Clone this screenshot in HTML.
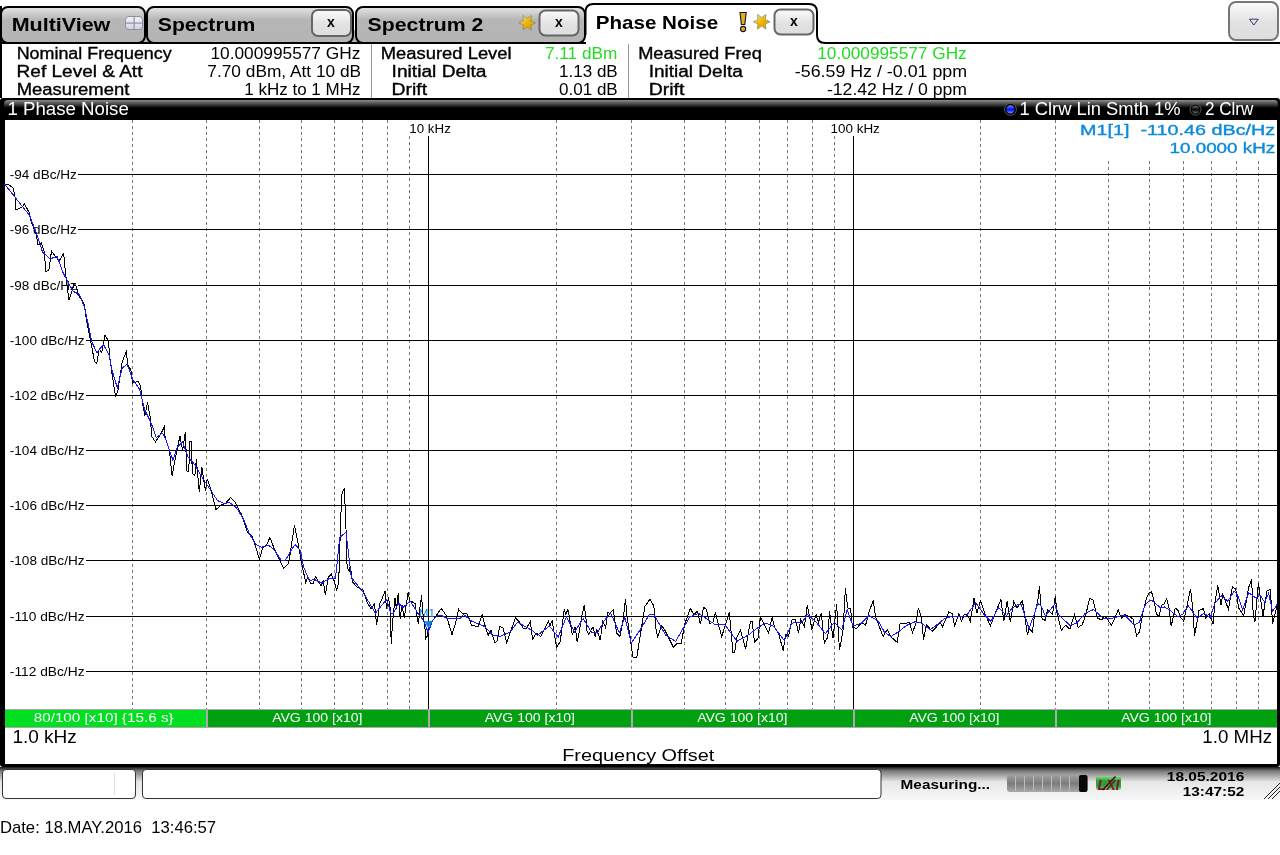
<!DOCTYPE html>
<html><head><meta charset="utf-8"><title>Phase Noise</title>
<style>
html,body{margin:0;padding:0;background:#fff;width:1280px;height:855px;overflow:hidden}
svg{display:block;font-family:"Liberation Sans", sans-serif;will-change:transform}
</style></head>
<body>
<svg width="1280" height="855" viewBox="0 0 1280 855">
<defs>
<linearGradient id="tabg" x1="0" y1="0" x2="0" y2="1">
<stop offset="0" stop-color="#e6e6e6"/><stop offset="0.35" stop-color="#b6b6b6"/><stop offset="1" stop-color="#b4b4b4"/>
</linearGradient>
<linearGradient id="icong" x1="0" y1="0" x2="0" y2="1"><stop offset="0" stop-color="#f4f4fa"/><stop offset="1" stop-color="#d4d4e2"/></linearGradient>
<linearGradient id="lxig" x1="0" y1="0" x2="0" y2="1"><stop offset="0" stop-color="#9ad09a"/><stop offset="0.35" stop-color="#2f9f2f"/><stop offset="0.7" stop-color="#2f9f2f"/><stop offset="1" stop-color="#8fd08f"/></linearGradient>
<linearGradient id="btng" x1="0" y1="0" x2="0" y2="1">
<stop offset="0" stop-color="#fbfbfb"/><stop offset="0.55" stop-color="#e2e2e2"/><stop offset="1" stop-color="#dedede"/>
</linearGradient>
<linearGradient id="hdrg" x1="0" y1="0" x2="0" y2="1">
<stop offset="0" stop-color="#8e8e8e"/><stop offset="0.4" stop-color="#000"/><stop offset="1" stop-color="#000"/>
</linearGradient>
<linearGradient id="statg" x1="0" y1="0" x2="0" y2="1">
<stop offset="0" stop-color="#1a1a1a"/><stop offset="0.12" stop-color="#7a7a7a"/><stop offset="0.45" stop-color="#e6e6e6"/><stop offset="1" stop-color="#f8f8f8"/>
</linearGradient>
<linearGradient id="progg" x1="0" y1="0" x2="0" y2="1">
<stop offset="0" stop-color="#a0a0a0"/><stop offset="0.5" stop-color="#7c7c7c"/><stop offset="1" stop-color="#a8a8a8"/>
</linearGradient>
<linearGradient id="starg" x1="0" y1="0" x2="1" y2="1">
<stop offset="0" stop-color="#fff0b0"/><stop offset="0.5" stop-color="#ebb400"/><stop offset="1" stop-color="#d9a000"/>
</linearGradient>
<linearGradient id="dotbl" x1="0" y1="0" x2="0" y2="1"><stop offset="0" stop-color="#7888ff"/><stop offset="0.5" stop-color="#0010ee"/><stop offset="1" stop-color="#7888ff"/></linearGradient>
<linearGradient id="dotgr" x1="0" y1="0" x2="0" y2="1"><stop offset="0" stop-color="#707070"/><stop offset="0.5" stop-color="#000"/><stop offset="1" stop-color="#707070"/></linearGradient>
<radialGradient id="dotb" cx="0.45" cy="0.4" r="0.6">
<stop offset="0" stop-color="#8090ff"/><stop offset="1" stop-color="#1020e0"/>
</radialGradient>
</defs>

<!-- Tabs -->
<rect x="138" y="30" width="16" height="13" fill="#b4b4b4"/>
<rect x="346" y="30" width="16" height="13" fill="#b4b4b4"/>
<rect x="1" y="7" width="144" height="36" rx="7" fill="url(#tabg)" stroke="#000" stroke-width="2"/>
<rect x="147" y="7" width="206" height="36" rx="7" fill="url(#tabg)" stroke="#000" stroke-width="2"/>
<rect x="356" y="7" width="229" height="36" rx="7" fill="url(#tabg)" stroke="#000" stroke-width="2"/>
<path d="M585.5,35 V12 Q585.5,4 593.5,4 H809 Q817,4 817,12 V35 Q817,43 825,43 H1280" fill="#fff" stroke="#000" stroke-width="2"/>
<!-- multiview icon -->
<rect x="0" y="42" width="586" height="2" fill="#000"/>
<rect x="125.5" y="16.5" width="17" height="13" rx="3.5" fill="url(#icong)" stroke="#8f8fa8" stroke-width="1"/>
<rect x="126" y="22.5" width="16" height="1.2" fill="#8f8fa8"/>
<rect x="133.5" y="17" width="1.2" height="12" fill="#8f8fa8"/>
<!-- close buttons -->
<rect x="312" y="10" width="39" height="26" rx="6" fill="url(#btng)" stroke="#666" stroke-width="2"/>
<rect x="539.5" y="10.5" width="39" height="25" rx="6" fill="url(#btng)" stroke="#666" stroke-width="2"/>
<rect x="774.5" y="9.5" width="39" height="25" rx="6" fill="url(#btng)" stroke="#666" stroke-width="2"/>
<g font-weight="bold" font-size="14" fill="#000" text-anchor="middle">
<text x="331" y="27">x</text><text x="559" y="27">x</text><text x="794" y="26">x</text>
</g>
<!-- stars -->
<path d="M535.60,22.80 L530.92,24.95 L531.40,30.07 L527.20,27.10 L523.00,30.07 L523.48,24.95 L518.80,22.80 L523.48,20.65 L523.00,15.53 L527.20,18.50 L531.40,15.53 L530.92,20.65 Z" fill="url(#starg)" stroke="#8a8060" stroke-width="0.7"/>
<path d="M770.10,21.80 L765.42,23.95 L765.90,29.07 L761.70,26.10 L757.50,29.07 L757.98,23.95 L753.30,21.80 L757.98,19.65 L757.50,14.53 L761.70,17.50 L765.90,14.53 L765.42,19.65 Z" fill="url(#starg)" stroke="#8a8060" stroke-width="0.7"/>
<!-- exclamation -->
<path d="M740,12.5 H746.2 L744.8,24.5 H741.4 Z" fill="#e8b000" stroke="#101040" stroke-width="1.1"/>
<circle cx="743.1" cy="29" r="2.6" fill="#e8b000" stroke="#101040" stroke-width="1.1"/>
<!-- dropdown button -->
<rect x="1229" y="2" width="49" height="38" rx="7" fill="url(#btng)" stroke="#777" stroke-width="2"/>
<path d="M1249.5,19.2 H1258.2 L1253.8,25 Z" fill="none" stroke="#33336a" stroke-width="1"/>

<!-- Info panel -->
<rect x="0" y="6" width="2" height="92" fill="#000"/>
<rect x="371" y="44" width="1" height="54" fill="#999"/>
<rect x="628" y="44" width="1" height="54" fill="#999"/>

<!-- Plot frame -->
<rect x="0" y="98" width="1280" height="669" rx="3" fill="#000"/>
<rect x="4" y="100" width="1274" height="20" rx="4" fill="url(#hdrg)"/>
<rect x="5" y="120" width="1272" height="644" fill="#fff"/>
<!-- trace dots -->
<circle cx="1010.4" cy="109.4" r="6" fill="#000" stroke="#555" stroke-width="1"/>
<circle cx="1010.4" cy="109.4" r="4.2" fill="url(#dotbl)"/>
<circle cx="1195.5" cy="109.6" r="5.5" fill="#000" stroke="#585858" stroke-width="1"/>
<circle cx="1195.5" cy="109.6" r="3.8" fill="url(#dotgr)"/>

<line x1="132.5" y1="120" x2="132.5" y2="709" stroke="#777" stroke-width="1" stroke-dasharray="3 3"/>
<line x1="206.5" y1="120" x2="206.5" y2="709" stroke="#777" stroke-width="1" stroke-dasharray="3 3"/>
<line x1="259.5" y1="120" x2="259.5" y2="709" stroke="#777" stroke-width="1" stroke-dasharray="3 3"/>
<line x1="301.5" y1="120" x2="301.5" y2="709" stroke="#777" stroke-width="1" stroke-dasharray="3 3"/>
<line x1="334.5" y1="120" x2="334.5" y2="709" stroke="#777" stroke-width="1" stroke-dasharray="3 3"/>
<line x1="362.5" y1="120" x2="362.5" y2="709" stroke="#777" stroke-width="1" stroke-dasharray="3 3"/>
<line x1="387.5" y1="120" x2="387.5" y2="709" stroke="#777" stroke-width="1" stroke-dasharray="3 3"/>
<line x1="409.5" y1="136" x2="409.5" y2="709" stroke="#777" stroke-width="1" stroke-dasharray="3 3"/>
<line x1="556.5" y1="120" x2="556.5" y2="709" stroke="#777" stroke-width="1" stroke-dasharray="3 3"/>
<line x1="631.5" y1="120" x2="631.5" y2="709" stroke="#777" stroke-width="1" stroke-dasharray="3 3"/>
<line x1="684.5" y1="120" x2="684.5" y2="709" stroke="#777" stroke-width="1" stroke-dasharray="3 3"/>
<line x1="725.5" y1="120" x2="725.5" y2="709" stroke="#777" stroke-width="1" stroke-dasharray="3 3"/>
<line x1="759.5" y1="120" x2="759.5" y2="709" stroke="#777" stroke-width="1" stroke-dasharray="3 3"/>
<line x1="787.5" y1="120" x2="787.5" y2="709" stroke="#777" stroke-width="1" stroke-dasharray="3 3"/>
<line x1="812.5" y1="120" x2="812.5" y2="709" stroke="#777" stroke-width="1" stroke-dasharray="3 3"/>
<line x1="834.5" y1="136" x2="834.5" y2="709" stroke="#777" stroke-width="1" stroke-dasharray="3 3"/>
<line x1="980.5" y1="120" x2="980.5" y2="709" stroke="#777" stroke-width="1" stroke-dasharray="3 3"/>
<line x1="1055.5" y1="120" x2="1055.5" y2="709" stroke="#777" stroke-width="1" stroke-dasharray="3 3"/>
<line x1="1108.5" y1="161" x2="1108.5" y2="709" stroke="#777" stroke-width="1" stroke-dasharray="3 3"/>
<line x1="1149.5" y1="161" x2="1149.5" y2="709" stroke="#777" stroke-width="1" stroke-dasharray="3 3"/>
<line x1="1183.5" y1="161" x2="1183.5" y2="709" stroke="#777" stroke-width="1" stroke-dasharray="3 3"/>
<line x1="1211.5" y1="161" x2="1211.5" y2="709" stroke="#777" stroke-width="1" stroke-dasharray="3 3"/>
<line x1="1236.5" y1="161" x2="1236.5" y2="709" stroke="#777" stroke-width="1" stroke-dasharray="3 3"/>
<line x1="1258.5" y1="161" x2="1258.5" y2="709" stroke="#777" stroke-width="1" stroke-dasharray="3 3"/>
<line x1="428.5" y1="136" x2="428.5" y2="709" stroke="#000" stroke-width="1"/>
<line x1="853.5" y1="136" x2="853.5" y2="709" stroke="#000" stroke-width="1"/>
<line x1="78" y1="174.5" x2="1277" y2="174.5" stroke="#000" stroke-width="1"/>
<line x1="78" y1="229.5" x2="1277" y2="229.5" stroke="#000" stroke-width="1"/>
<line x1="78" y1="285.5" x2="1277" y2="285.5" stroke="#000" stroke-width="1"/>
<line x1="86" y1="340.5" x2="1277" y2="340.5" stroke="#000" stroke-width="1"/>
<line x1="86" y1="395.5" x2="1277" y2="395.5" stroke="#000" stroke-width="1"/>
<line x1="86" y1="450.5" x2="1277" y2="450.5" stroke="#000" stroke-width="1"/>
<line x1="86" y1="505.5" x2="1277" y2="505.5" stroke="#000" stroke-width="1"/>
<line x1="86" y1="560.5" x2="1277" y2="560.5" stroke="#000" stroke-width="1"/>
<line x1="86" y1="616.5" x2="1277" y2="616.5" stroke="#000" stroke-width="1"/>
<line x1="86" y1="671.5" x2="1277" y2="671.5" stroke="#000" stroke-width="1"/>

<!-- green bar -->
<rect x="5" y="709" width="1272" height="19" fill="#b0a8b0"/>
<rect x="5" y="710" width="201" height="17" fill="#00e020"/>
<rect x="208" y="710" width="220" height="17" fill="#00a010"/>
<rect x="430" y="710" width="201" height="17" fill="#00a010"/>
<rect x="633" y="710" width="220" height="17" fill="#00a010"/>
<rect x="855" y="710" width="200" height="17" fill="#00a010"/>
<rect x="1057" y="710" width="220" height="17" fill="#00a010"/>

<!-- status bar -->
<rect x="0" y="767" width="1280" height="33" fill="url(#statg)"/>
<rect x="2.5" y="769.5" width="133" height="29" rx="3.5" fill="#fff" stroke="#333" stroke-width="1"/>
<rect x="114" y="773" width="1" height="22" fill="#ddd"/>
<rect x="142.5" y="769.5" width="738.5" height="29" rx="3.5" fill="#fff" stroke="#333" stroke-width="1"/>
<!-- progress bar -->
<rect x="1007" y="775" width="80.5" height="17" rx="3" fill="url(#progg)"/>
<g fill="#bdbdbd">
<rect x="1015" y="776" width="1" height="15"/><rect x="1024" y="776" width="1" height="15"/><rect x="1033" y="776" width="1" height="15"/>
<rect x="1042" y="776" width="1" height="15"/><rect x="1051" y="776" width="1" height="15"/><rect x="1060" y="776" width="1" height="15"/>
<rect x="1069" y="776" width="1" height="15"/>
</g>
<rect x="1079" y="775" width="8.5" height="17" rx="2" fill="#080808"/>
<!-- LXI -->
<rect x="1096" y="776" width="25" height="14" rx="2" fill="url(#lxig)"/>
<text x="1097.5" y="789.5" font-size="15.5" font-weight="bold" font-style="italic" fill="#7a1538" textLength="22" lengthAdjust="spacingAndGlyphs">LXI</text>
<line x1="1102.5" y1="790" x2="1115.5" y2="776.5" stroke="#4a1020" stroke-width="1.6"/>
<!-- hatch -->
<g stroke="#222" stroke-width="1">
<line x1="1264" y1="799" x2="1280" y2="783"/><line x1="1268" y1="799" x2="1280" y2="787"/><line x1="1272" y1="799" x2="1280" y2="791"/>
</g>

<text x="11.67" y="31.00" font-size="19.00" font-weight="bold" fill="#000" textLength="98.68" lengthAdjust="spacingAndGlyphs" >MultiView</text>
<text x="157.80" y="31.00" font-size="19.00" font-weight="bold" fill="#000" textLength="97.60" lengthAdjust="spacingAndGlyphs" >Spectrum</text>
<text x="367.60" y="31.00" font-size="19.00" font-weight="bold" fill="#000" textLength="115.83" lengthAdjust="spacingAndGlyphs" >Spectrum 2</text>
<text x="595.72" y="29.00" font-size="19.00" font-weight="bold" fill="#000" textLength="122.40" lengthAdjust="spacingAndGlyphs" >Phase Noise</text>
<text x="16.68" y="59.00" font-size="16.00" font-weight="normal" fill="#000" textLength="155.02" lengthAdjust="spacingAndGlyphs"  stroke="#000" stroke-width="0.35">Nominal Frequency</text>
<text x="16.62" y="77.00" font-size="16.00" font-weight="normal" fill="#000" textLength="125.83" lengthAdjust="spacingAndGlyphs"  stroke="#000" stroke-width="0.35">Ref Level &amp; Att</text>
<text x="16.65" y="95.00" font-size="16.00" font-weight="normal" fill="#000" textLength="112.71" lengthAdjust="spacingAndGlyphs"  stroke="#000" stroke-width="0.35">Measurement</text>
<text x="210.42" y="59.00" font-size="16.00" font-weight="normal" fill="#000" textLength="149.98" lengthAdjust="spacingAndGlyphs" >10.000995577 GHz</text>
<text x="207.30" y="77.00" font-size="16.00" font-weight="normal" fill="#000" textLength="153.82" lengthAdjust="spacingAndGlyphs" >7.70 dBm, Att 10 dB</text>
<text x="244.34" y="95.00" font-size="16.00" font-weight="normal" fill="#000" textLength="116.06" lengthAdjust="spacingAndGlyphs" >1 kHz to 1 MHz</text>
<text x="380.75" y="59.00" font-size="16.00" font-weight="normal" fill="#000" textLength="130.89" lengthAdjust="spacingAndGlyphs"  stroke="#000" stroke-width="0.35">Measured Level</text>
<text x="391.60" y="77.00" font-size="16.00" font-weight="normal" fill="#000" textLength="94.78" lengthAdjust="spacingAndGlyphs"  stroke="#000" stroke-width="0.35">Initial Delta</text>
<text x="391.59" y="95.00" font-size="16.00" font-weight="normal" fill="#000" textLength="35.54" lengthAdjust="spacingAndGlyphs"  stroke="#000" stroke-width="0.35">Drift</text>
<text x="544.90" y="59.00" font-size="16.00" font-weight="normal" fill="#22dd22" textLength="72.45" lengthAdjust="spacingAndGlyphs" >7.11 dBm</text>
<text x="559.14" y="77.00" font-size="16.00" font-weight="normal" fill="#000" textLength="58.58" lengthAdjust="spacingAndGlyphs" >1.13 dB</text>
<text x="559.10" y="95.00" font-size="16.00" font-weight="normal" fill="#000" textLength="58.61" lengthAdjust="spacingAndGlyphs" >0.01 dB</text>
<text x="638.16" y="59.00" font-size="16.00" font-weight="normal" fill="#000" textLength="123.66" lengthAdjust="spacingAndGlyphs"  stroke="#000" stroke-width="0.35">Measured Freq</text>
<text x="648.71" y="77.00" font-size="16.00" font-weight="normal" fill="#000" textLength="94.07" lengthAdjust="spacingAndGlyphs"  stroke="#000" stroke-width="0.35">Initial Delta</text>
<text x="648.68" y="95.00" font-size="16.00" font-weight="normal" fill="#000" textLength="35.74" lengthAdjust="spacingAndGlyphs"  stroke="#000" stroke-width="0.35">Drift</text>
<text x="817.22" y="59.00" font-size="16.00" font-weight="normal" fill="#22dd22" textLength="149.48" lengthAdjust="spacingAndGlyphs" >10.000995577 GHz</text>
<text x="794.80" y="77.00" font-size="16.00" font-weight="normal" fill="#000" textLength="172.27" lengthAdjust="spacingAndGlyphs" >-56.59 Hz / -0.01 ppm</text>
<text x="826.90" y="95.00" font-size="16.00" font-weight="normal" fill="#000" textLength="140.16" lengthAdjust="spacingAndGlyphs" >-12.42 Hz / 0 ppm</text>
<text x="7.43" y="115.00" font-size="17.50" font-weight="normal" fill="#fff" textLength="121.35" lengthAdjust="spacingAndGlyphs" >1 Phase Noise</text>
<text x="1019.45" y="115.00" font-size="17.50" font-weight="normal" fill="#fff" textLength="161.14" lengthAdjust="spacingAndGlyphs" >1 Clrw Lin Smth 1%</text>
<text x="1205.00" y="115.00" font-size="17.50" font-weight="normal" fill="#fff" textLength="48.40" lengthAdjust="spacingAndGlyphs" >2 Clrw</text>
<text x="409.30" y="133.00" font-size="13.00" font-weight="normal" fill="#000" textLength="41.51" lengthAdjust="spacingAndGlyphs" >10 kHz</text>
<text x="830.50" y="133.00" font-size="13.00" font-weight="normal" fill="#000" textLength="49.32" lengthAdjust="spacingAndGlyphs" >100 kHz</text>
<text x="9.80" y="179.00" font-size="13.00" font-weight="normal" fill="#000" textLength="66.92" lengthAdjust="spacingAndGlyphs" >-94 dBc/Hz</text>
<text x="9.80" y="234.00" font-size="13.00" font-weight="normal" fill="#000" textLength="66.92" lengthAdjust="spacingAndGlyphs" >-96 dBc/Hz</text>
<text x="9.80" y="290.00" font-size="13.00" font-weight="normal" fill="#000" textLength="66.92" lengthAdjust="spacingAndGlyphs" >-98 dBc/Hz</text>
<text x="9.80" y="345.00" font-size="13.00" font-weight="normal" fill="#000" textLength="74.72" lengthAdjust="spacingAndGlyphs" >-100 dBc/Hz</text>
<text x="9.80" y="400.00" font-size="13.00" font-weight="normal" fill="#000" textLength="74.72" lengthAdjust="spacingAndGlyphs" >-102 dBc/Hz</text>
<text x="9.80" y="455.00" font-size="13.00" font-weight="normal" fill="#000" textLength="74.72" lengthAdjust="spacingAndGlyphs" >-104 dBc/Hz</text>
<text x="9.80" y="510.00" font-size="13.00" font-weight="normal" fill="#000" textLength="74.72" lengthAdjust="spacingAndGlyphs" >-106 dBc/Hz</text>
<text x="9.80" y="565.00" font-size="13.00" font-weight="normal" fill="#000" textLength="74.72" lengthAdjust="spacingAndGlyphs" >-108 dBc/Hz</text>
<text x="9.80" y="621.00" font-size="13.00" font-weight="normal" fill="#000" textLength="74.73" lengthAdjust="spacingAndGlyphs" >-110 dBc/Hz</text>
<text x="9.80" y="676.00" font-size="13.00" font-weight="normal" fill="#000" textLength="74.73" lengthAdjust="spacingAndGlyphs" >-112 dBc/Hz</text>
<text x="1080.14" y="135.00" font-size="14.50" font-weight="normal" fill="#0b8ad8" textLength="195.10" lengthAdjust="spacingAndGlyphs" xml:space="preserve" stroke="#0b8ad8" stroke-width="0.35">M1[1]  -110.46 dBc/Hz</text>
<text x="1169.50" y="153.00" font-size="14.50" font-weight="normal" fill="#0b8ad8" textLength="105.72" lengthAdjust="spacingAndGlyphs"  stroke="#0b8ad8" stroke-width="0.35">10.0000 kHz</text>
<text x="418.70" y="617.00" font-size="11.60" font-weight="normal" fill="#0b8ad8" textLength="16.25" lengthAdjust="spacingAndGlyphs" >M1</text>
<text x="12.41" y="743.00" font-size="17.50" font-weight="normal" fill="#000" textLength="64.40" lengthAdjust="spacingAndGlyphs" >1.0 kHz</text>
<text x="1202.33" y="743.00" font-size="17.50" font-weight="normal" fill="#000" textLength="69.67" lengthAdjust="spacingAndGlyphs" >1.0 MHz</text>
<text x="562.16" y="761.00" font-size="16.00" font-weight="normal" fill="#000" textLength="152.15" lengthAdjust="spacingAndGlyphs" >Frequency Offset</text>
<text x="33.70" y="722.00" font-size="13.00" font-weight="normal" fill="#fff" textLength="139.93" lengthAdjust="spacingAndGlyphs" >80/100 [x10] {15.6 s}</text>
<text x="272.15" y="722.00" font-size="13.00" font-weight="normal" fill="#fff" textLength="90.36" lengthAdjust="spacingAndGlyphs" >AVG 100 [x10]</text>
<text x="484.65" y="722.00" font-size="13.00" font-weight="normal" fill="#fff" textLength="90.36" lengthAdjust="spacingAndGlyphs" >AVG 100 [x10]</text>
<text x="697.15" y="722.00" font-size="13.00" font-weight="normal" fill="#fff" textLength="90.36" lengthAdjust="spacingAndGlyphs" >AVG 100 [x10]</text>
<text x="909.15" y="722.00" font-size="13.00" font-weight="normal" fill="#fff" textLength="90.36" lengthAdjust="spacingAndGlyphs" >AVG 100 [x10]</text>
<text x="1121.15" y="722.00" font-size="13.00" font-weight="normal" fill="#fff" textLength="90.36" lengthAdjust="spacingAndGlyphs" >AVG 100 [x10]</text>
<text x="900.60" y="789.00" font-size="13.00" font-weight="bold" fill="#000" textLength="89.52" lengthAdjust="spacingAndGlyphs" >Measuring...</text>
<text x="1166.80" y="781.00" font-size="13.00" font-weight="bold" fill="#000" textLength="77.47" lengthAdjust="spacingAndGlyphs" >18.05.2016</text>
<text x="1182.70" y="796.00" font-size="13.00" font-weight="bold" fill="#000" textLength="61.57" lengthAdjust="spacingAndGlyphs" >13:47:52</text>
<text x="-0.08" y="833.00" font-size="17.00" font-weight="normal" fill="#000" textLength="216.23" lengthAdjust="spacingAndGlyphs" xml:space="preserve">Date: 18.MAY.2016  13:46:57</text>
<!-- traces -->
<polyline points="4.5,184.0 9.0,185.0 12.9,187.9 14.8,194.3 16.0,209.7 21.9,207.2 24.5,204.0 29.0,212.3 31.5,222.6 36.0,233.0 38.0,245.0 41.2,243.0 44.4,252.0 45.7,271.5 48.9,270.0 51.5,251.0 56.0,257.0 59.2,261.0 63.7,253.5 65.6,274.0 69.0,300.3 73.9,284.7 76.4,286.4 78.0,294.5 84.5,304.4 86.2,319.0 91.9,347.0 94.4,361.7 96.8,363.3 99.3,348.6 101.7,352.6 105.0,335.5 108.3,340.4 109.9,358.4 112.4,376.4 115.6,396.8 118.1,389.5 122.2,361.7 126.3,351.8 127.9,365.0 130.9,370.0 132.6,383.2 137.9,381.4 140.5,385.8 142.3,401.6 144.9,415.6 147.5,402.5 150.2,417.4 151.9,436.7 155.4,441.9 160.7,434.0 164.2,427.0 165.1,436.7 169.5,450.7 172.1,476.1 174.7,461.2 180.0,435.8 182.6,450.7 185.3,432.3 187.0,470.9 188.8,471.8 189.6,441.0 191.4,441.0 192.3,473.5 194.9,475.3 196.3,459.5 199.3,491.9 201.9,467.4 205.4,491.0 207.2,478.8 210.7,489.3 216.0,509.5 221.2,505.1 225.6,503.3 230.6,497.5 234.8,501.7 241.8,515.1 247.4,532.6 251.7,535.4 255.2,545.2 259.4,559.3 262.9,547.3 266.4,545.2 269.9,537.5 273.4,546.6 280.4,562.1 283.9,568.4 288.8,562.8 291.6,543.8 294.5,524.9 298.0,543.1 301.5,562.8 305.7,582.4 307.8,576.8 310.6,583.1 313.4,583.1 315.5,576.8 321.1,585.9 323.2,580.3 325.3,595.1 328.2,577.4 331.3,574.2 334.5,581.6 336.6,591.1 338.7,582.6 340.8,516.3 341.8,494.2 344.4,487.9 346.0,529.0 347.1,566.8 349.2,571.1 350.3,565.8 352.4,581.6 356.6,586.8 362.9,590.0 367.1,602.6 371.3,608.9 374.5,603.7 376.6,624.7 379.7,604.7 380.0,602.7 381.9,599.5 385.1,590.6 386.5,609.3 388.4,597.1 390.3,609.3 391.2,643.9 392.6,622.4 395.0,598.1 396.4,609.3 398.2,593.4 400.1,618.6 402.0,605.5 404.3,617.7 408.1,592.5 409.9,600.9 412.3,601.8 415.1,603.7 417.0,616.8 418.4,624.3 420.2,605.5 421.6,595.3 422.6,611.2 424.9,628.0 425.8,638.3 427.7,635.5 429.1,622.4 432.4,621.0 441.3,608.4 446.4,615.8 452.0,634.5 455.8,622.4 458.6,609.3 461.9,612.9 467.4,614.0 471.7,625.5 478.3,626.6 482.1,614.5 484.3,623.3 488.1,635.3 490.9,629.9 494.7,642.4 496.9,641.9 499.6,626.6 502.9,627.7 506.7,643.0 510.0,633.1 515.5,617.8 518.8,621.1 523.2,628.2 526.4,628.2 530.3,621.7 532.5,639.2 536.3,633.1 540.7,636.4 548.3,621.1 550.0,625.5 552.1,620.6 556.5,647.4 560.3,641.3 564.2,609.6 565.8,614.0 568.0,609.6 572.4,634.8 575.1,626.6 577.2,641.9 579.4,631.0 582.1,614.5 584.3,605.2 585.9,617.8 587.0,631.0 588.7,634.2 590.9,629.9 593.1,627.1 595.2,636.4 596.9,629.3 600.2,640.3 602.9,621.1 605.6,627.7 607.8,612.4 610.0,613.4 613.3,609.6 616.6,633.1 619.9,636.4 623.1,620.0 625.5,599.2 627.0,616.7 629.7,634.2 631.9,650.6 633.0,657.2 636.8,657.2 640.6,633.1 645.0,606.3 650.0,599.2 653.8,605.8 656.0,628.8 657.6,637.5 661.4,625.5 664.7,629.9 673.5,647.4 676.8,643.5 681.1,643.5 685.0,623.3 690.4,608.5 693.7,614.5 697.5,611.3 700.3,624.4 703.6,607.4 706.3,609.1 709.6,623.3 712.9,622.7 715.3,612.5 717.6,621.3 721.7,636.6 725.8,623.7 729.3,612.5 731.1,631.9 732.9,652.4 734.6,652.4 737.0,636.6 740.5,630.1 745.7,648.9 750.4,621.3 752.2,621.3 754.5,642.4 758.0,638.3 760.4,617.2 768.6,633.0 772.1,617.2 775.0,628.4 778.6,633.6 783.2,650.6 785.6,634.2 788.5,636.0 792.0,619.6 795.5,619.6 798.5,632.5 800.8,619.6 804.3,626.6 807.3,605.5 812.0,629.5 816.1,614.3 818.4,622.5 821.3,613.1 824.3,643.0 827.8,637.2 829.5,611.4 833.0,638.3 836.6,604.3 839.5,650.0 843.0,630.7 845.4,588.5 847.7,607.9 850.6,609.0 852.4,627.2 856.5,628.4 862.0,622.5 865.5,625.4 869.1,612.0 873.2,600.2 875.5,616.6 883.1,636.6 887.2,629.5 890.7,636.6 897.2,642.4 900.1,623.7 903.6,623.7 909.5,622.5 912.4,632.5 915.9,623.7 918.3,608.4 921.2,616.6 923.6,639.5 926.5,624.8 932.3,631.3 940.6,622.5 942.3,627.2 948.8,612.0 952.3,613.7 954.6,626.6 958.7,613.7 961.6,621.3 964.0,614.9 967.5,614.9 970.4,621.3 974.0,598.5 976.9,613.1 980.4,600.8 984.5,612.5 990.4,626.0 996.2,610.8 1000.9,599.6 1003.8,621.3 1007.1,601.3 1010.4,622.0 1013.7,601.3 1017.0,607.8 1022.4,600.7 1024.6,614.4 1027.4,635.2 1029.0,628.6 1032.3,631.9 1035.0,612.2 1037.7,601.3 1039.4,586.5 1042.1,618.8 1045.4,620.4 1047.6,609.5 1052.5,614.4 1055.3,596.3 1056.9,612.2 1061.3,630.3 1065.6,625.3 1070.0,629.2 1074.4,614.4 1078.2,627.5 1082.1,624.8 1085.3,616.6 1089.7,598.5 1093.0,599.6 1097.4,618.2 1101.8,619.9 1105.0,616.0 1111.6,625.3 1118.2,610.0 1121.4,618.2 1125.3,614.4 1132.9,618.8 1136.7,635.8 1139.5,631.8 1142.9,612.6 1146.3,599.0 1148.6,593.3 1151.4,591.6 1153.7,599.0 1156.5,614.8 1159.3,615.4 1161.6,605.2 1163.9,604.6 1166.7,598.4 1169.0,608.0 1171.2,626.2 1175.2,608.0 1178.0,610.3 1180.3,617.1 1183.7,621.1 1188.2,600.1 1190.5,589.3 1192.8,608.0 1194.5,636.3 1199.0,610.3 1203.5,608.6 1205.8,618.2 1209.2,613.7 1213.1,623.9 1214.8,603.5 1217.7,585.4 1221.1,605.2 1222.8,594.4 1228.4,609.2 1232.4,586.5 1235.8,589.3 1238.6,608.0 1243.7,615.4 1248.8,587.1 1251.6,579.2 1253.3,616.0 1255.0,621.6 1258.4,583.1 1263.0,616.0 1266.9,591.0 1270.3,589.3 1272.6,623.9 1276.0,610.3 1277.0,606.0" fill="none" stroke="#000" stroke-width="1" shape-rendering="crispEdges"/>
<polyline points="4.5,184.0 29.6,215.5 37.3,235.5 42.5,252.0 50.0,258.7 57.3,256.7 63.3,273.3 73.1,291.3 79.6,294.5 84.5,307.6 88.6,325.6 91.9,342.0 96.8,352.6 103.4,344.5 109.1,355.1 112.4,371.5 117.3,387.8 122.2,368.2 127.1,364.1 132.8,379.7 139.6,389.3 144.9,410.4 151.0,422.6 156.3,437.5 162.5,433.2 166.0,440.2 173.0,460.4 177.4,447.2 182.6,441.9 187.9,456.8 194.9,464.7 201.9,477.0 210.7,490.2 217.7,500.7 224.7,503.7 229.2,502.4 236.2,507.4 243.2,518.6 249.6,534.0 255.9,544.5 261.5,547.3 268.5,545.2 273.4,548.8 281.1,560.0 285.3,560.7 290.2,551.6 295.2,544.5 300.1,550.2 303.6,567.0 309.2,580.3 314.8,579.6 321.8,583.1 328.8,578.9 335.5,578.4 339.7,537.4 346.0,532.1 351.3,577.4 362.9,592.1 375.5,613.2 380.0,607.4 386.5,599.5 390.8,613.0 393.1,613.5 398.7,603.2 402.9,607.4 406.2,604.6 410.4,601.3 418.4,614.0 424.0,621.0 428.2,632.7 432.4,620.5 437.1,615.8 442.2,615.8 447.4,618.6 460.0,618.6 463.5,614.5 471.7,621.1 484.9,626.6 492.5,635.3 500.2,636.4 510.0,632.0 517.7,622.2 533.0,631.0 537.4,635.3 549.4,626.0 558.2,637.0 566.4,616.7 574.6,632.0 583.2,618.4 591.4,632.0 597.4,633.1 604.0,621.1 610.6,612.9 619.3,632.6 624.8,617.3 631.3,643.0 640.6,629.3 649.4,614.5 653.8,614.5 665.8,635.3 675.7,641.3 689.9,616.7 698.6,613.4 714.7,624.3 724.6,624.3 737.0,641.3 748.7,634.8 756.9,628.4 765.1,623.1 773.3,626.0 784.4,640.7 792.0,623.1 802.6,621.9 807.3,614.3 815.5,621.3 825.4,633.6 834.2,622.5 841.8,630.1 847.1,609.6 853.0,626.0 861.4,623.1 869.1,615.5 878.4,621.3 884.3,631.9 890.7,636.6 898.4,631.9 906.6,625.4 914.8,621.9 920.6,622.5 930.0,629.5 934.7,626.6 944.1,619.0 952.3,616.0 965.7,616.6 975.7,602.6 983.9,614.3 991.0,621.3 998.6,607.3 1006.6,615.5 1011.5,608.9 1018.0,604.5 1021.3,604.5 1025.2,616.6 1029.0,628.6 1033.4,616.6 1037.7,603.4 1041.0,605.6 1045.4,616.0 1054.7,604.0 1059.1,615.5 1070.0,625.3 1076.6,623.1 1085.3,613.3 1093.5,609.5 1103.9,618.8 1109.4,618.8 1118.2,616.6 1124.7,615.0 1134.0,624.8 1139.5,622.2 1144.6,605.8 1149.7,600.1 1153.1,601.2 1160.5,608.0 1164.4,606.9 1170.1,610.3 1177.5,616.5 1182.6,614.3 1188.2,605.8 1197.3,618.2 1204.1,613.1 1210.3,617.7 1214.8,603.5 1221.1,595.6 1227.9,601.2 1234.1,591.0 1237.5,595.0 1242.6,609.7 1248.8,592.7 1256.2,598.4 1260.1,595.0 1264.7,602.4 1268.6,593.3 1272.6,611.4 1277.0,604.6" fill="none" stroke="#1a1aff" stroke-width="1" shape-rendering="crispEdges"/>
<!-- marker -->
<path d="M424.3,621.3 H432.5 L428.4,628.5 Z" fill="#0b8ad8"/>


</svg>
</body></html>
